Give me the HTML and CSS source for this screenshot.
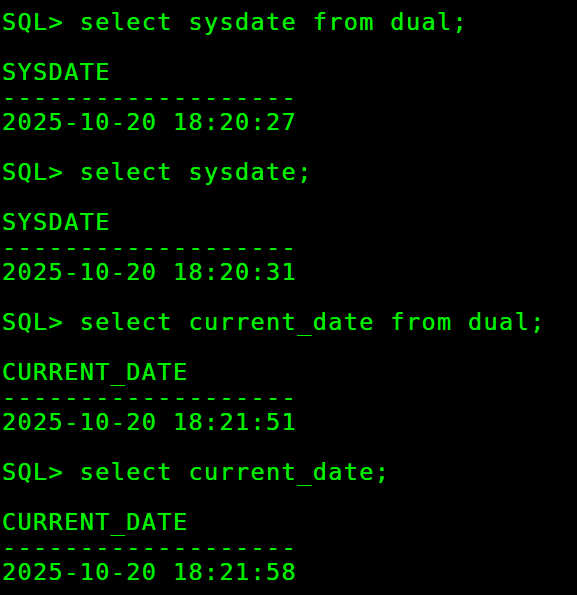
FILE: index.html
```html
<!DOCTYPE html>
<html>
<head>
<meta charset="utf-8">
<link rel="stylesheet" href="styles.css">
</head>
<body>
<pre class="term">SQL&gt; select sysdate from dual;

SYSDATE
-------------------
2025-10-20 18:20:27

SQL&gt; select sysdate;

SYSDATE
-------------------
2025-10-20 18:20:31

SQL&gt; select current_date from dual;

CURRENT_DATE
-------------------
2025-10-20 18:21:51

SQL&gt; select current_date;

CURRENT_DATE
-------------------
2025-10-20 18:21:58</pre>
</body>
</html>
```
FILE: styles.css
```css
html, body {
  margin: 0;
  padding: 0;
  background: #000;
  height: 100%;
  overflow: hidden;
}
.term {
  margin: 0;
  padding: 10px 0 0 2px;
  font-family: "DejaVu Sans Mono", monospace;
  font-size: 23.6px;
  letter-spacing: 1.33px;
  line-height: 25px;
  color: #00f000;
  text-shadow: 0 0 0.6px #00f000;
  white-space: pre;
}
```
